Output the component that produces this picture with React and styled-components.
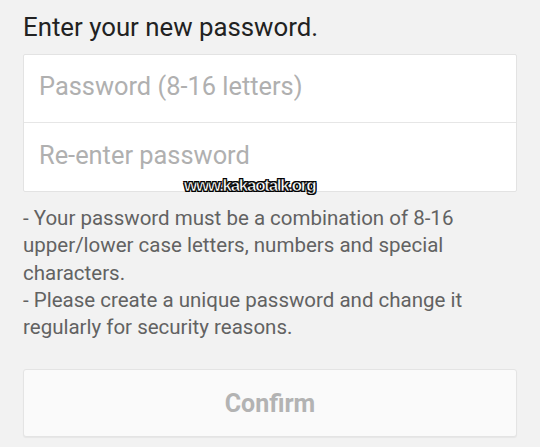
import styled, { createGlobalStyle } from "styled-components";

const Global = createGlobalStyle`
  html, body {
    margin: 0;
    padding: 0;
    background: #f2f2f2;
    font-family: Roboto, "Noto Sans", sans-serif;
  }
`;

export default function App() {
  return (
    <>
      <Global />
      <Page>
        <Title>Enter your new password.</Title>
        <FieldGroup>
          <Field placeholder="Password (8-16 letters)" />
          <Field placeholder="Re-enter password" last />
          <Watermark>www.kakaotalk.org</Watermark>
        </FieldGroup>
        <Notes>
          <p>- Your password must be a combination of 8-16 upper/lower case letters, numbers and special characters.</p>
          <p>- Please create a unique password and change it regularly for security reasons.</p>
        </Notes>
        <ConfirmButton disabled>Confirm</ConfirmButton>
      </Page>
    </>
  );
}

const Page = styled.div`
  width: 540px;
  height: 447px;
  padding: 12px 23px 0 23px;
  box-sizing: border-box;
  display: flex;
  flex-direction: column;
  overflow: hidden;
`;

const Title = styled.h1`
  margin: 0;
  font-weight: 400;
  font-size: 25.8px;
  line-height: 30px;
  color: #222222;
`;

const FieldGroup = styled.div`
  position: relative;
  margin-top: 12px;
  background: #ffffff;
  border: 1px solid #e3e3e3;
  border-radius: 2px;
  display: flex;
  flex-direction: column;
`;

const Field = styled.input.attrs({ type: "password" })`
  height: 68px;
  border: none;
  border-bottom: ${(p) => (p.last ? "none" : "1px solid #e6e6e6")};
  background: transparent;
  padding: 0 15px 5px 15px;
  box-sizing: border-box;
  font-family: Roboto, sans-serif;
  font-size: 25.4px;
  color: #333;
  outline: none;
  &::placeholder {
    color: #b0b0b0;
  }
`;

const Watermark = styled.span`
  position: absolute;
  left: 160px;
  bottom: -5px;
  font-family: "Liberation Sans", Arial, sans-serif;
  font-size: 17px;
  font-weight: 700;
  letter-spacing: -1.3px;
  color: #ffffff;
  -webkit-text-stroke: 0.5px #000;
  text-shadow: 0 0 1px #000, 1px 1px 0 #000, -1px -1px 0 #000, 1px -1px 0 #000, -1px 1px 0 #000;
`;

const Notes = styled.div`
  margin-top: 13px;
  color: #626262;
  font-size: 20.5px;
  line-height: 27.3px;
  p {
    margin: 0;
  }
`;

const ConfirmButton = styled.button`
  margin-top: 28px;
  height: 68px;
  width: 100%;
  background: #fafafa;
  border: 1px solid #e4e4e4;
  border-radius: 3px;
  box-shadow: 0 1px 1px rgba(0, 0, 0, 0.05);
  font-family: Roboto, sans-serif;
  font-weight: 700;
  font-size: 25px;
  color: #b3b3b3;
`;
